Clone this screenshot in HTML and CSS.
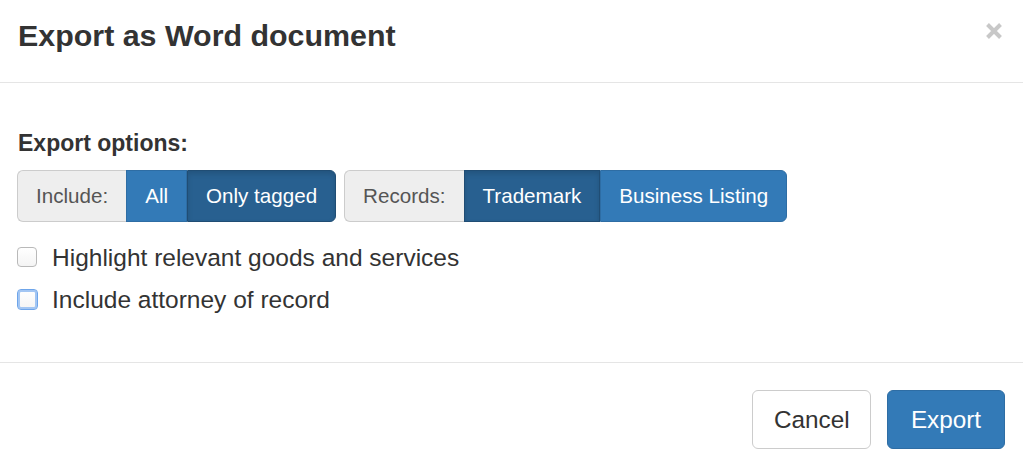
FILE: index.html
```html
<!DOCTYPE html>
<html lang="en">
<head>
<meta charset="utf-8">
<title>Export as Word document</title>
<link rel="stylesheet" href="styles.css">
</head>
<body>
<div class="modal">
  <div class="modal-header">
    <h4 class="modal-title">Export as Word document</h4>
    <button class="close" type="button" aria-label="Close">
      <svg width="18" height="18" viewBox="0 0 18 18"><path d="M2.5 2.5 L15.5 15.5 M15.5 2.5 L2.5 15.5" stroke="#c8c8c8" stroke-width="4" stroke-linecap="butt"/></svg>
    </button>
  </div>
  <div class="modal-body">
    <div class="section-label">Export options:</div>
    <div class="groups">
      <div class="btn-group">
        <span class="addon">Include:</span>
        <span class="seg primary">All</span>
        <span class="seg primary active last">Only tagged</span>
      </div>
      <div class="btn-group">
        <span class="addon">Records:</span>
        <span class="seg primary active">Trademark</span>
        <span class="seg primary last">Business Listing</span>
      </div>
    </div>
    <label class="check-row">
      <span class="box"></span>
      <span class="check-text">Highlight relevant goods and services</span>
    </label>
    <label class="check-row">
      <span class="box focus"></span>
      <span class="check-text">Include attorney of record</span>
    </label>
  </div>
  <div class="modal-footer">
    <button class="btn btn-default" type="button">Cancel</button>
    <button class="btn btn-primary" type="button">Export</button>
  </div>
</div>
</body>
</html>
```
FILE: styles.css
```css
* { box-sizing: border-box; }
html, body {
  margin: 0;
  padding: 0;
  background: #fff;
}
body {
  font-family: "Liberation Sans", Arial, sans-serif;
  color: #333;
  width: 1023px;
  height: 463px;
  overflow: hidden;
}
.modal-header {
  display: flex;
  justify-content: space-between;
  align-items: flex-start;
  height: 83px;
  padding: 15px 20px 0 18px;
  border-bottom: 1px solid #e5e5e5;
}
.modal-title {
  margin: 0;
  font-size: 30.4px;
  line-height: 40px;
  font-weight: 700;
  color: #333;
}
.close {
  border: 0;
  background: none;
  padding: 0;
  margin-top: 7px;
  width: 18px;
  height: 18px;
  display: flex;
}
.modal-body {
  padding: 45px 17px 0 17px;
  height: 280px;
  border-bottom: 1px solid #e5e5e5;
}
.section-label {
  font-size: 23px;
  font-weight: 700;
  line-height: 30px;
  padding-left: 1px;
  color: #333;
}
.groups {
  display: flex;
  gap: 8px;
  margin-top: 12px;
}
.btn-group {
  display: flex;
  height: 52px;
  font-size: 20.6px;
}
.btn-group > span {
  display: flex;
  align-items: center;
  padding: 0 18px;
  border: 1px solid transparent;
}
.addon {
  background: #eee;
  border-color: #ccc !important;
  color: #555;
  border-radius: 6px 0 0 6px;
  border-right: 0 !important;
}
.seg.primary {
  background: #337ab7;
  border-color: #2e6da4;
  color: #fff;
}
.seg.primary.active {
  background: #286090;
  border-color: #204d74;
  box-shadow: inset 0 3px 5px rgba(0, 0, 0, 0.125);
}
.seg.last {
  border-radius: 0 6px 6px 0;
}
.check-row {
  display: flex;
  align-items: center;
  gap: 15px;
  height: 30px;
  font-size: 24.5px;
  line-height: 30px;
  margin-top: 12px;
}
.groups + .check-row {
  margin-top: 21px;
}
.box {
  width: 20px;
  height: 20px;
  border: 1px solid #b9b9b9;
  border-radius: 4px;
  background: linear-gradient(#fff, #f4f4f4);
  margin-top: -2px;
  flex: none;
}
.box.focus {
  width: 21px;
  height: 21px;
  margin-right: -1px;
  border: 1px solid #6ea5ea;
  box-shadow: inset 0 0 0 2px #a3c6f3;
}
.modal-footer {
  display: flex;
  justify-content: flex-end;
  gap: 16px;
  padding: 27px 18px 0 0;
}
.btn {
  height: 59px;
  font-family: "Liberation Sans", Arial, sans-serif;
  font-size: 24.3px;
  border-radius: 6px;
  border: 1px solid transparent;
  padding: 0 21px;
  line-height: 57px;
}
.btn-default {
  background: #fff;
  color: #333;
  border-color: #ccc;
  width: 119px;
}
.btn-primary {
  background: #337ab7;
  color: #fff;
  border-color: #2e6da4;
  width: 118px;
}
```
